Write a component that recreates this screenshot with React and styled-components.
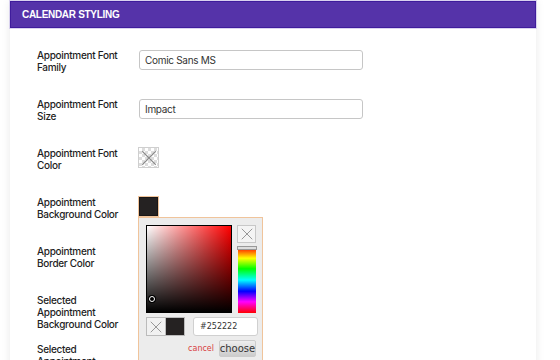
import styled, { createGlobalStyle } from "styled-components"

const GlobalStyle = createGlobalStyle`
  html, body { margin: 0; padding: 0; background: #fff; }
  body { font-family: Inter, "Liberation Sans", Arial, sans-serif; color: #222; }
`

const rows = [
  { label: ["Appointment Font", "Family"], type: "input", value: "Comic Sans MS" },
  { label: ["Appointment Font", "Size"], type: "input", value: "Impact" },
  { label: ["Appointment Font", "Color"], type: "empty" },
  { label: ["Appointment", "Background Color"], type: "active" },
  { label: ["Appointment", "Border Color"], type: "none" },
  { label: ["Selected", "Appointment", "Background Color"], type: "none" },
  { label: ["Selected", "Appointment", "Border Color"], type: "none" },
]

const App = () => {
  return (
    <>
      <GlobalStyle />
      <Page>
        <Panel>
          <Header>CALENDAR STYLING</Header>
          <Body>
            {rows.map((row, i) => (
              <Row key={i}>
                <Label>
                  {row.label.map((l, j) => (
                    <span key={j}>{l}</span>
                  ))}
                </Label>
                <Field>
                  {row.type === "input" && <TextInput defaultValue={row.value} />}
                  {row.type === "empty" && (
                    <Swatch>
                      <EmptyColor>
                        <CrossIcon size={18} />
                      </EmptyColor>
                    </Swatch>
                  )}
                  {row.type === "active" && (
                    <SwatchWrap>
                      <Swatch $active>
                        <Fill />
                      </Swatch>
                      <Picker />
                    </SwatchWrap>
                  )}
                </Field>
              </Row>
            ))}
          </Body>
        </Panel>
      </Page>
    </>
  )
}

const CrossIcon = ({ size = 16, color = "#8a8a8a" }) => (
  <svg width={size} height={size} viewBox="0 0 16 16">
    <path d="M2 2 L14 14 M14 2 L2 14" stroke={color} strokeWidth="1" fill="none" />
  </svg>
)

const Picker = () => (
  <PickerBox>
    <PickerTop>
      <Spectrum>
        <Dragger />
      </Spectrum>
      <SideCol>
        <ClearBtn>
          <CrossIcon size={14} />
        </ClearBtn>
        <Hue>
          <HueHandle />
        </Hue>
      </SideCol>
    </PickerTop>
    <PickerBottom>
      <Initial>
        <InitialCell>
          <CrossIcon size={14} />
        </InitialCell>
        <InitialCell $color="#252222" />
      </Initial>
      <HexInput defaultValue="#252222" />
    </PickerBottom>
    <Buttons>
      <Cancel>cancel</Cancel>
      <Choose>choose</Choose>
    </Buttons>
  </PickerBox>
)

const Page = styled.div`
  width: 560px;
  height: 360px;
  overflow: hidden;
  padding: 1px 0 0 10px;
  box-sizing: border-box;
`

const Panel = styled.div`
  width: 526px;
  min-height: 400px;
  background: #fff;
  box-shadow: 0 0 9px rgba(0, 0, 0, 0.09);
`

const Header = styled.div`
  height: 27px;
  box-sizing: border-box;
  background: #5533a9;
  border: 1px solid #3f1c9c;
  outline: 1px solid #d9d2ef;
  color: #fff;
  font-family: "Liberation Sans", Arial, sans-serif;
  font-weight: 700;
  font-size: 10px;
  letter-spacing: -0.3px;
  display: flex;
  align-items: center;
  padding-left: 11px;
`

const Body = styled.div`
  padding: 21px 0 0 27px;
`

const Row = styled.div`
  display: flex;
  align-items: flex-start;
  height: 49px;
`

const Label = styled.div`
  width: 102px;
  display: flex;
  flex-direction: column;
  font-size: 10px;
  font-weight: 500;
  letter-spacing: -0.3px;
  line-height: 12px;
  color: #1e1e1e;
`

const Field = styled.div`
  display: flex;
  padding-top: 1px;
`

const TextInput = styled.input`
  width: 224px;
  height: 20px;
  box-sizing: border-box;
  border: 1px solid #c6c6c6;
  border-radius: 3px;
  padding: 0 5px;
  font-family: Inter, "Liberation Sans", Arial, sans-serif;
  font-size: 10px;
  letter-spacing: -0.3px;
  color: #333;
  outline: none;
`

const SwatchWrap = styled.div`
  position: relative;
`

const Swatch = styled.div`
  width: 21px;
  height: 21px;
  box-sizing: border-box;
  border: 1px solid ${(p) => (p.$active ? "#f0c49b" : "#cfcfcf")};
  margin-left: -1px;
  margin-top: -1px;
  display: flex;
  align-items: center;
  justify-content: center;
`

const EmptyColor = styled.div`
  width: 19px;
  height: 19px;
  display: flex;
  align-items: center;
  justify-content: center;
  background-color: #fff;
  background-image: linear-gradient(45deg, #ddd 25%, transparent 25%, transparent 75%, #ddd 75%),
    linear-gradient(45deg, #ddd 25%, transparent 25%, transparent 75%, #ddd 75%);
  background-size: 6px 6px;
  background-position: 0 0, 3px 3px;
`

const Fill = styled.div`
  width: 19px;
  height: 19px;
  box-sizing: border-box;
  background: #252222;
  border: 1px solid #1a1717;
`

const PickerBox = styled.div`
  position: absolute;
  top: 20px;
  left: -1px;
  width: 125px;
  height: 160px;
  box-sizing: border-box;
  background: #ececec;
  border: 1px solid #f0c49b;
  padding: 7px 6px 0 7px;
  z-index: 2;
`

const PickerTop = styled.div`
  display: flex;
  gap: 5px;
`

const Spectrum = styled.div`
  position: relative;
  width: 88px;
  height: 88px;
  box-sizing: border-box;
  border: 1px solid #000;
  background: linear-gradient(to top, #000, rgba(0, 0, 0, 0)),
    linear-gradient(to right, #fff, rgba(255, 255, 255, 0)), #ff0000;
`

const Dragger = styled.div`
  position: absolute;
  left: 2px;
  bottom: 10px;
  width: 4px;
  height: 4px;
  border: 1px solid #fff;
  border-radius: 50%;
  background: #000;
  box-shadow: 0 0 0 1px #000;
`

const SideCol = styled.div`
  display: flex;
  flex-direction: column;
  gap: 4px;
`

const ClearBtn = styled.div`
  width: 19px;
  height: 18px;
  box-sizing: border-box;
  border: 1px solid #c8c8c8;
  background: #f4f4f4;
  display: flex;
  align-items: center;
  justify-content: center;
`

const Hue = styled.div`
  position: relative;
  width: 18px;
  height: 66px;
  margin-left: 1px;
  background: linear-gradient(
    to bottom,
    #ff0000 0%,
    #ffff00 17%,
    #00ff00 33%,
    #00ffff 50%,
    #0000ff 67%,
    #ff00ff 83%,
    #ff0000 100%
  );
`

const HueHandle = styled.div`
  position: absolute;
  left: -1px;
  right: -1px;
  top: -1px;
  height: 2px;
  background: #ddd;
  border: 1px solid #999;
`

const PickerBottom = styled.div`
  display: flex;
  align-items: center;
  margin-top: 4px;
  gap: 8px;
`

const Initial = styled.div`
  display: flex;
  border: 1px solid #bbb;
  background: #bbb;
  gap: 1px;
`

const InitialCell = styled.div`
  width: 18px;
  height: 17px;
  background: ${(p) => p.$color || "#f1f1f1"};
  display: flex;
  align-items: center;
  justify-content: center;
`

const HexInput = styled.input`
  width: 65px;
  height: 19px;
  box-sizing: border-box;
  border: 1px solid #d0d0d0;
  border-radius: 3px;
  background: #fff;
  padding: 0 0 0 6px;
  font-family: "DejaVu Sans", "Liberation Sans", sans-serif;
  font-size: 8px;
  color: #333;
  outline: none;
`

const Buttons = styled.div`
  display: flex;
  justify-content: flex-end;
  align-items: center;
  gap: 5px;
  margin-top: 4px;
`

const Cancel = styled.span`
  font-family: "DejaVu Sans", "Liberation Sans", sans-serif;
  font-size: 8px;
  color: #d93f3f;
`

const Choose = styled.div`
  width: 37px;
  height: 17px;
  box-sizing: border-box;
  border: 1px solid #ccc;
  border-radius: 2px;
  background: linear-gradient(to bottom, #eee, #ccc);
  font-family: "DejaVu Sans", "Liberation Sans", sans-serif;
  font-size: 10px;
  color: #333;
  display: flex;
  align-items: center;
  justify-content: center;
`

export default App
